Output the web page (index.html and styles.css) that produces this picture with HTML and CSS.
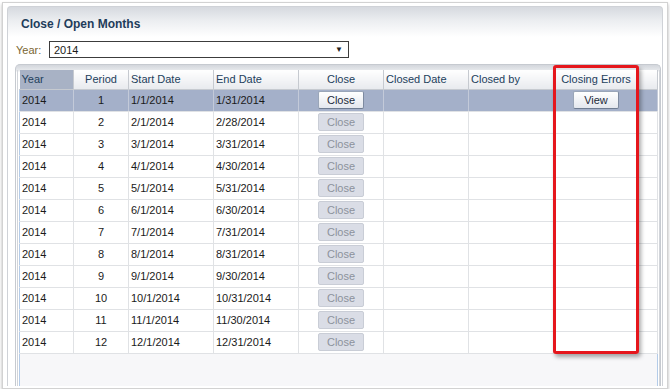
FILE: index.html
```html
<!DOCTYPE html>
<html lang="en">
<head>
  <meta charset="UTF-8" />
  <title>Close / Open Months</title>
  <link rel="stylesheet" href="styles.css">
</head>
<body>

  <!-- Window frame -->
  <div class="shot">
    <div class="panel">
      <h1 class="title">Close / Open Months</h1>

      <div class="year-row">
        <label class="year-label">Year:</label>
        <div class="year-select">
          <span>2014</span>
          <span class="arrow">&#9660;</span>
        </div>
      </div>

      <!-- Periods table -->
      <div class="tframe">
        <div class="tinner">
          <table class="grid">
            <colgroup>
              <col style="width:54px"><col style="width:55px"><col style="width:85px"><col style="width:85px">
              <col style="width:85px"><col style="width:85px"><col style="width:85px"><col style="width:85px"><col>
            </colgroup>
            <thead>
              <tr>
                <th class="sorted">Year</th>
                <th class="center">Period</th>
                <th>Start Date</th>
                <th>End Date</th>
                <th class="center">Close</th>
                <th>Closed Date</th>
                <th>Closed by</th>
                <th class="center">Closing Errors</th>
                <th></th>
              </tr>
            </thead>
            <tbody>
              <tr class="selected">
                <td>2014</td><td class="center">1</td><td>1/1/2014</td><td>1/31/2014</td>
                <td class="center"><button class="btn">Close</button></td><td></td><td></td>
                <td class="center"><button class="btn">View</button></td><td></td>
              </tr>
              <tr>
                <td>2014</td><td class="center">2</td><td>2/1/2014</td><td>2/28/2014</td>
                <td class="center"><button class="btn" disabled>Close</button></td><td></td><td></td><td></td><td></td>
              </tr>
              <tr>
                <td>2014</td><td class="center">3</td><td>3/1/2014</td><td>3/31/2014</td>
                <td class="center"><button class="btn" disabled>Close</button></td><td></td><td></td><td></td><td></td>
              </tr>
              <tr>
                <td>2014</td><td class="center">4</td><td>4/1/2014</td><td>4/30/2014</td>
                <td class="center"><button class="btn" disabled>Close</button></td><td></td><td></td><td></td><td></td>
              </tr>
              <tr>
                <td>2014</td><td class="center">5</td><td>5/1/2014</td><td>5/31/2014</td>
                <td class="center"><button class="btn" disabled>Close</button></td><td></td><td></td><td></td><td></td>
              </tr>
              <tr>
                <td>2014</td><td class="center">6</td><td>6/1/2014</td><td>6/30/2014</td>
                <td class="center"><button class="btn" disabled>Close</button></td><td></td><td></td><td></td><td></td>
              </tr>
              <tr>
                <td>2014</td><td class="center">7</td><td>7/1/2014</td><td>7/31/2014</td>
                <td class="center"><button class="btn" disabled>Close</button></td><td></td><td></td><td></td><td></td>
              </tr>
              <tr>
                <td>2014</td><td class="center">8</td><td>8/1/2014</td><td>8/31/2014</td>
                <td class="center"><button class="btn" disabled>Close</button></td><td></td><td></td><td></td><td></td>
              </tr>
              <tr>
                <td>2014</td><td class="center">9</td><td>9/1/2014</td><td>9/30/2014</td>
                <td class="center"><button class="btn" disabled>Close</button></td><td></td><td></td><td></td><td></td>
              </tr>
              <tr>
                <td>2014</td><td class="center">10</td><td>10/1/2014</td><td>10/31/2014</td>
                <td class="center"><button class="btn" disabled>Close</button></td><td></td><td></td><td></td><td></td>
              </tr>
              <tr>
                <td>2014</td><td class="center">11</td><td>11/1/2014</td><td>11/30/2014</td>
                <td class="center"><button class="btn" disabled>Close</button></td><td></td><td></td><td></td><td></td>
              </tr>
              <tr>
                <td>2014</td><td class="center">12</td><td>12/1/2014</td><td>12/31/2014</td>
                <td class="center"><button class="btn" disabled>Close</button></td><td></td><td></td><td></td><td></td>
              </tr>
            </tbody>
          </table>
          <div class="filler"></div>
        </div>

        <!-- Annotation around Closing Errors -->
        <div class="highlight"></div>
      </div>
    </div>
  </div>

</body>
</html>
```

FILE: styles.css
```css
:root {
  --text: #1a1a1a;
  --head-text: #22405c;
  --grid-line: #e0e2e5;
  --frame-line: #c6cad0;
  --selected-bg: #a4b0c9;
}

* {
  box-sizing: border-box;
}

html, body {
  margin: 0;
  padding: 0;
  background: #fff;
  font-family: 'Liberation Sans', Arial, sans-serif;
  font-size: 11px;
  color: var(--text);
  overflow: hidden;
}

.shot {
  margin: 2px 2px 0 2px;
  height: 387px;
  border: 1px solid #d2d2d2;
  box-shadow: 0 2px 3px rgba(0, 0, 0, 0.3);
  padding: 3px 4px 2px 4px;
}

.panel {
  height: 100%;
  border: 1px solid #cfd2d7;
  border-bottom: none;
  border-radius: 4px 4px 0 0;
  background: linear-gradient(#d6d9df 0, #eceef1 14px, #fff 30px);
  padding: 9px 1px 0 7px;
  display: flex;
  flex-direction: column;
}

.title {
  margin: 0 0 0 6px;
  font-size: 12px;
  line-height: 16px;
  font-weight: bold;
  color: #1f3d5b;
}

.year-row {
  display: flex;
  align-items: center;
  margin-top: 9px;
  height: 17px;
}

.year-label {
  color: #7a6632;
  width: 34px;
  padding-left: 1px;
}

.year-select {
  width: 300px;
  height: 17px;
  border: 1px solid #3c3c3c;
  display: flex;
  justify-content: space-between;
  align-items: center;
  padding: 0 5px 0 4px;
  background: #fff;
}

.year-select .arrow {
  font-size: 8px;
  color: #222;
}

.tframe {
  position: relative;
  flex: 1;
  margin-top: 6px;
  border: 1px solid var(--frame-line);
  border-bottom: none;
  border-radius: 5px 5px 0 0;
  background: linear-gradient(#d3d6dc 0, #e9ebee 6px, #fff 7px);
  padding: 5px 1px 0 1px;
  display: flex;
}

.tinner {
  flex: 1;
  border-left: 1px solid #d2d5da;
  border-right: 1px solid #d2d5da;
  padding: 0 1px;
  display: flex;
  flex-direction: column;
}

.grid {
  width: 639px;
  border-collapse: collapse;
  table-layout: fixed;
}

.grid th {
  height: 19px;
  font-weight: normal;
  text-align: left;
  color: var(--head-text);
  padding: 0 2px;
  background: linear-gradient(#fff, #e8eaee);
  border-right: 1px solid var(--frame-line);
  border-bottom: 1px solid var(--frame-line);
  white-space: nowrap;
}

.grid th.sorted {
  background: #a8b2c5;
}

.grid td {
  height: 22px;
  padding: 0 2px;
  border-right: 1px solid var(--grid-line);
  border-bottom: 1px solid var(--grid-line);
  white-space: nowrap;
}

.grid tbody td:first-child {
  border-left: 1px solid #b3cbe8;
}

.grid .center {
  text-align: center;
}

.grid tr.selected td {
  background: var(--selected-bg);
  border-right-color: #c3cad9;
}

.btn {
  font-family: inherit;
  font-size: 11px;
  width: 46px;
  height: 18px;
  padding: 0;
  color: #1c2a3a;
  border: 1px solid #9aa6b8;
  border-bottom-color: #6f7d92;
  border-right-color: #7d8aa0;
  border-radius: 2px;
  background: linear-gradient(#ffffff, #e4e7ee);
  vertical-align: middle;
}

.btn:disabled {
  color: #8c929c;
  background: #dadde6;
  border-color: #c9cdd6;
}

.filler {
  flex: 1;
  background: #f7f7f9;
  border-left: 1px solid #b3cbe8;
  border-right: 1px solid #b3cbe8;
}

.highlight {
  position: absolute;
  left: 537px;
  top: 0;
  width: 86px;
  height: 289px;
  border: 3px solid #e5161c;
  border-radius: 3px;
  box-shadow: 2px 3px 4px rgba(0, 0, 0, 0.35);
}
```
